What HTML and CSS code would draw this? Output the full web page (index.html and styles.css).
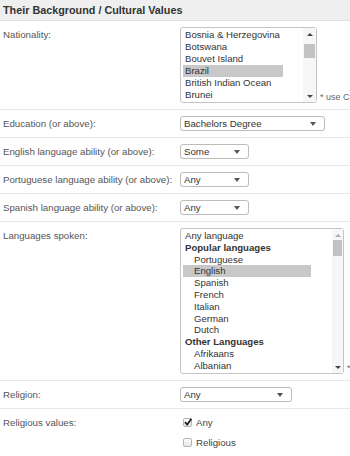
FILE: index.html
```html
<!DOCTYPE html>
<html>
<head>
<meta charset="utf-8">
<link rel="stylesheet" href="styles.css">
</head>
<body>
<div class="page">
  <div class="header">Their Background / Cultural Values</div>

  <div class="row">
    <div class="label">Nationality:</div>
    <div class="field">
      <div class="listbox nat">
        <div class="items">
          <div class="opt">Bosnia &amp; Herzegovina</div>
          <div class="opt">Botswana</div>
          <div class="opt">Bouvet Island</div>
          <div class="opt sel">Brazil</div>
          <div class="opt">British Indian Ocean</div>
          <div class="opt">Brunei</div>
        </div>
        <div class="scroll">
          <span class="up"></span>
          <span class="thumb nat-thumb"></span>
          <span class="down"></span>
        </div>
      </div>
      <div class="note">* use Ctrl</div>
    </div>
  </div>

  <div class="row">
    <div class="label">Education (or above):</div>
    <div class="field"><div class="select w-edu">Bachelors Degree<span class="arrow"></span></div></div>
  </div>

  <div class="row">
    <div class="label">English language ability (or above):</div>
    <div class="field"><div class="select w-lang">Some<span class="arrow"></span></div></div>
  </div>

  <div class="row">
    <div class="label">Portuguese language ability (or above):</div>
    <div class="field"><div class="select w-lang">Any<span class="arrow"></span></div></div>
  </div>

  <div class="row">
    <div class="label">Spanish language ability (or above):</div>
    <div class="field"><div class="select w-lang">Any<span class="arrow"></span></div></div>
  </div>

  <div class="row">
    <div class="label">Languages spoken:</div>
    <div class="field">
      <div class="listbox langs">
        <div class="items">
          <div class="opt">Any language</div>
          <div class="opt grp">Popular languages</div>
          <div class="opt sub">Portuguese</div>
          <div class="opt sub sel">English</div>
          <div class="opt sub">Spanish</div>
          <div class="opt sub">French</div>
          <div class="opt sub">Italian</div>
          <div class="opt sub">German</div>
          <div class="opt sub">Dutch</div>
          <div class="opt grp">Other Languages</div>
          <div class="opt sub">Afrikaans</div>
          <div class="opt sub">Albanian</div>
        </div>
        <div class="scroll">
          <span class="up dim"></span>
          <span class="thumb lang-thumb"></span>
          <span class="down"></span>
        </div>
      </div>
      <div class="note">*</div>
    </div>
  </div>

  <div class="row">
    <div class="label">Religion:</div>
    <div class="field"><div class="select w-rel">Any<span class="arrow"></span></div></div>
  </div>

  <div class="row last">
    <div class="label">Religious values:</div>
    <div class="field checks">
      <label class="check"><span class="box on"><svg viewBox="0 0 10 10" width="10" height="10"><path d="M2 5.2 L4.2 7.6 L8.4 1.8" fill="none" stroke="#222" stroke-width="1.8"/></svg></span>Any</label>
      <label class="check"><span class="box"></span>Religious</label>
    </div>
  </div>
</div>
</body>
</html>
```

FILE: styles.css
```css
html, body {
  margin: 0;
  padding: 0;
  background: #fff;
}
body {
  width: 350px;
  height: 456px;
  overflow: hidden;
  font-family: "Liberation Sans", Arial, sans-serif;
  font-size: 9.7px;
  color: #555;
}
.header {
  height: 20px;
  line-height: 20px;
  padding-left: 3px;
  background: #efefef;
  border-bottom: 1px solid #dedede;
  font-weight: bold;
  font-size: 10.8px;
  color: #333;
  white-space: nowrap;
}
.row {
  display: flex;
  padding: 6px 0;
  border-bottom: 1px solid #e9e9e9;
}
.row.last {
  border-bottom: none;
}
.label {
  width: 177px;
  padding-left: 3px;
  line-height: 15px;
  flex: none;
  white-space: nowrap;
}
.field {
  display: flex;
  align-items: flex-end;
  gap: 3px;
  white-space: nowrap;
  min-width: 0;
  overflow: hidden;
}
.note {
  font-size: 9px;
  line-height: 12px;
  color: #666;
  overflow: hidden;
}
.select {
  position: relative;
  box-sizing: border-box;
  height: 15px;
  line-height: 13px;
  padding-left: 3px;
  border: 1px solid #bcbcbc;
  border-radius: 3px;
  background: #fff;
  color: #333;
  box-shadow: 0 1px 1px rgba(0,0,0,0.05);
}
.w-edu { width: 145px; }
.w-lang { width: 69px; }
.w-rel { width: 112px; }
.arrow {
  position: absolute;
  right: 8px;
  top: 5px;
  width: 0;
  height: 0;
  border-left: 3px solid transparent;
  border-right: 3px solid transparent;
  border-top: 4px solid #555;
}
.listbox {
  box-sizing: border-box;
  flex: none;
  display: flex;
  justify-content: space-between;
  border: 1px solid #c4c4c4;
  border-radius: 3px;
  background: #fff;
  padding: 1px 0 1px 2px;
  color: #333;
  font-size: 9.6px;
}
.nat { width: 137px; }
.langs { width: 164px; }
.items { display: flex; flex-direction: column; }
.nat .items { width: 100px; }
.langs .items { width: 128px; }
.opt {
  line-height: 12px;
  height: 12px;
  padding-left: 2px;
  white-space: nowrap;
}
.langs .opt {
  line-height: 11.8px;
  height: 11.8px;
}
.opt.sel { background: #c8c8c8; }
.opt.grp { font-weight: bold; }
.opt.sub { padding-left: 11px; }
.scroll {
  width: 13px;
  position: relative;
  background: #f6f6f6;
  margin: -1px 0;
}
.langs .scroll { width: 11px; }
.up, .down {
  position: absolute;
  left: 50%;
  margin-left: -3px;
  width: 0; height: 0;
  border-left: 3px solid transparent;
  border-right: 3px solid transparent;
}
.up { top: 5px; border-bottom: 3px solid #444; }
.up.dim { border-bottom-color: #aaa; }
.down { bottom: 4px; border-top: 3px solid #444; }
.thumb {
  position: absolute;
  left: 1px;
  right: 1px;
  background: #c2c2c2;
}
.nat-thumb { top: 16px; height: 14px; }
.lang-thumb { top: 11px; height: 16px; }
.checks {
  flex-direction: column;
  align-items: flex-start;
  gap: 5px;
  padding-top: 0;
}
.check {
  display: flex;
  align-items: center;
  gap: 4px;
  line-height: 15px;
  color: #444;
  padding-left: 3px;
}
.box {
  box-sizing: border-box;
  width: 9px;
  height: 9px;
  border: 1px solid #b5b5b5;
  border-radius: 2px;
  background: linear-gradient(#fdfdfd, #e6e6e6);
  position: relative;
}
.box svg {
  position: absolute;
  left: -1px;
  top: -2px;
}
```
